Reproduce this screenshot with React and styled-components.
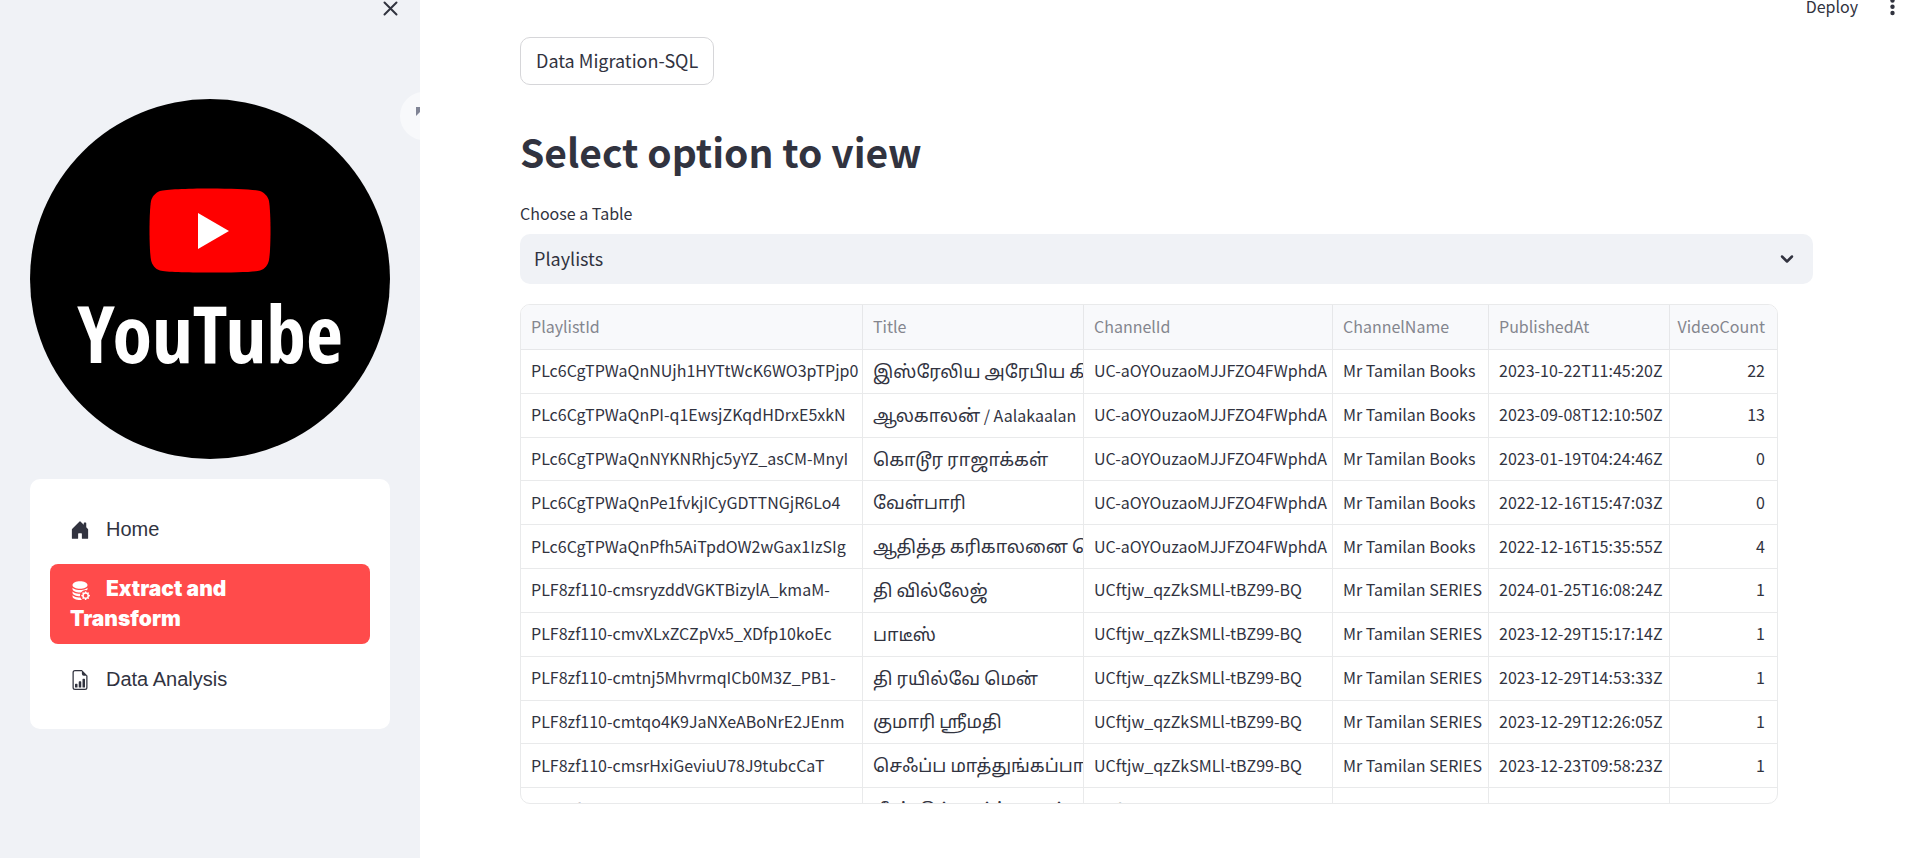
import React from 'react';
import styled, { createGlobalStyle } from 'styled-components';
import { BsHouseDoorFill, BsDatabaseFillGear, BsFileEarmarkBarGraph } from 'react-icons/bs';

const sans = '"Noto Sans CJK SC", "Noto Sans Tamil", "Noto Sans", sans-serif';

const GlobalStyle = createGlobalStyle`
  *, *::before, *::after { box-sizing: border-box; }
  body { margin: 0; background: #fff; color: #31333f; font-family: ${sans}; font-size: 18px; }
  button, select { font: inherit; color: inherit; }
`;

const Page = styled.div`
  display: flex;
  min-height: 100vh;
`;

const Sidebar = styled.aside`
  position: relative;
  flex: 0 0 420px;
  padding: 0 30px;
  background: #f0f2f6;
  overflow: hidden;
`;

const SidebarHeader = styled.div`
  display: flex;
  justify-content: flex-end;
  height: 99px;
  margin-right: -9px;
`;

const IconButton = styled.button`
  display: flex;
  align-items: flex-start;
  justify-content: center;
  padding: 0;
  border: 0;
  background: none;
  cursor: pointer;
`;

const FullscreenButton = styled(IconButton)`
  position: absolute;
  top: 92px;
  right: -28px;
  width: 48px;
  height: 48px;
  padding: 15px 0 0;
  border-radius: 50%;
  background: #f8f9fb;
  color: #808495;
`;

const Logo = styled.svg`
  display: block;
  width: 100%;
  height: auto;
`;

const Nav = styled.nav`
  display: flex;
  flex-direction: column;
  gap: 10px;
  margin-top: 20px;
  padding: 25px 20px;
  border-radius: 10px;
  background: #fff;
`;

const NavLink = styled.a`
  padding: 10px 20px;
  border-radius: 8px;
  background: ${(p) => (p.$active ? '#ff4b4b' : 'transparent')};
  color: ${(p) => (p.$active ? '#fff' : '#31333f')};
  font-family: ${(p) => (p.$active ? '"Arial Black", Inter' : '"Liberation Sans"')}, sans-serif;
  font-size: ${(p) => (p.$active ? '21px' : '20px')};
  font-weight: ${(p) => (p.$active ? 900 : 400)};
  line-height: 30px;
  text-decoration: none;

  svg {
    width: 20px;
    height: 20px;
    margin-right: 16px;
    vertical-align: -4px;
  }
`;

const Main = styled.main`
  flex: 1;
  min-width: 0;
  padding: 0 106px 54px 100px;
`;

const Toolbar = styled.header`
  position: absolute;
  top: 0;
  right: 20px;
  display: flex;
  gap: 28px;
`;

const DeployButton = styled.button`
  height: 12px;
  padding: 0;
  border: 0;
  background: none;
  font-size: 16px;
  line-height: 12px;
  cursor: pointer;
`;

const ActionButton = styled.button`
  display: block;
  height: 48px;
  margin-top: 37px;
  padding: 0 15px 2px;
  border: 1px solid #d6d6d9;
  border-radius: 10px;
  background: #fff;
  font-size: 18px;
  cursor: pointer;
`;

const Title = styled.h1`
  margin: 36px 0 0;
  font-size: 39px;
  font-weight: 600;
  line-height: 60px;
`;

const Label = styled.label`
  display: block;
  margin-top: 21px;
  font-size: 16px;
  line-height: 22px;
`;

const SelectWrap = styled.div`
  display: grid;
  align-items: center;
  margin-top: 10px;

  > * { grid-area: 1 / 1; }
  > svg { justify-self: end; margin-right: 15px; pointer-events: none; }
`;

const Select = styled.select`
  width: 100%;
  height: 50px;
  padding: 0 14px 2px;
  border: 0;
  border-radius: 10px;
  background: #f0f2f6;
  appearance: none;
`;

const TableFrame = styled.div`
  width: min(1258px, 100%);
  height: 500px;
  margin-top: 20px;
  border: 1px solid #e9eaeb;
  border-radius: 10px;
  overflow: hidden;
`;

const Table = styled.table`
  width: 100%;
  height: 527px;
  border-collapse: separate;
  border-spacing: 0;
  table-layout: fixed;
  font-size: 16px;
`;

const HeadCell = styled.th`
  width: ${(p) => p.$width};
  height: 45px;
  padding: 0 10px 2px;
  border: solid #e6e7e9;
  border-width: 0 1px 1px 0;
  background: #f8f9fb;
  color: #84868e;
  font-weight: 400;
  line-height: 20px;
  text-align: ${(p) => (p.$numeric ? 'right' : 'left')};
  white-space: nowrap;
  &:last-child { border-right: 0; padding-left: 0; padding-right: 12px; }
`;

const Cell = styled.td`
  padding: 0 0 2px 10px;
  border: solid #e9eaeb;
  border-width: 0 1px 1px 0;
  line-height: 20px;
  text-align: ${(p) => (p.$numeric ? 'right' : 'left')};
  white-space: nowrap;
  overflow: hidden;
  &:last-child { border-right: 0; padding-right: 12px; }
`;

const Tamil = styled.span`
  font-size: 18px;
`;

const columns = [
  ['PlaylistId', '342px'],
  ['Title', '221px'],
  ['ChannelId', '249px'],
  ['ChannelName', '156px'],
  ['PublishedAt', '181px'],
  ['VideoCount', 'auto'],
];

const books = ['UC-aOYOuzaoMJJFZO4FWphdA', 'Mr Tamilan Books'];
const series = ['UCftjw_qzZkSMLl-tBZ99-BQ', 'Mr Tamilan SERIES'];

const rows = [
  ['PLc6CgTPWaQnNUjh1HYTtWcK6WO3pTPjp0', <Tamil>இஸ்ரேலிய அரேபிய கிளர்ச்சி</Tamil>, ...books, '2023-10-22T11:45:20Z', 22],
  ['PLc6CgTPWaQnPI-q1EwsjZKqdHDrxE5xkN', <><Tamil>ஆலகாலன்</Tamil> / Aalakaalan</>, ...books, '2023-09-08T12:10:50Z', 13],
  ['PLc6CgTPWaQnNYKNRhjc5yYZ_asCM-MnyI', <Tamil>கொடூர ராஜாக்கள்</Tamil>, ...books, '2023-01-19T04:24:46Z', 0],
  ['PLc6CgTPWaQnPe1fvkjICyGDTTNGjR6Lo4', <Tamil>வேள்பாரி</Tamil>, ...books, '2022-12-16T15:47:03Z', 0],
  ['PLc6CgTPWaQnPfh5AiTpdOW2wGax1IzSIg', <Tamil>ஆதித்த கரிகாலனை கொன்றது</Tamil>, ...books, '2022-12-16T15:35:55Z', 4],
  ['PLF8zf110-cmsryzddVGKTBizylA_kmaM-', <Tamil>தி வில்லேஜ்</Tamil>, ...series, '2024-01-25T16:08:24Z', 1],
  ['PLF8zf110-cmvXLxZCZpVx5_XDfp10koEc', <Tamil>பாடீஸ்</Tamil>, ...series, '2023-12-29T15:17:14Z', 1],
  ['PLF8zf110-cmtnj5MhvrmqICb0M3Z_PB1-', <Tamil>தி ரயில்வே மென்</Tamil>, ...series, '2023-12-29T14:53:33Z', 1],
  ['PLF8zf110-cmtqo4K9JaNXeABoNrE2JEnm', <Tamil>குமாரி ஸ்ரீமதி</Tamil>, ...series, '2023-12-29T12:26:05Z', 1],
  ['PLF8zf110-cmsrHxiGeviuU78J9tubcCaT', <Tamil>செஃப்ப மாத்துங்கப்பா</Tamil>, ...series, '2023-12-23T09:58:23Z', 1],
  ['PLF8zf110-cmuZo5iSaRwEzNVxWqCdTn', <Tamil>மீண்டும் பார்க்கலாம்</Tamil>, ...series, '2023-12-22T10:15:32Z', 1],
];

export default function App() {
  return (
    <>
      <GlobalStyle />
      <Page>
        <Sidebar>
          <SidebarHeader>
            <IconButton aria-label="Close sidebar">
              <svg width="17" height="17" viewBox="0 0 17 17" stroke="#31333f" strokeWidth="2" strokeLinecap="round">
                <path d="M2.500 2.500 14.500 14.500M14.500 2.500 2.500 14.500" />
              </svg>
            </IconButton>
          </SidebarHeader>
          <Logo viewBox="0 0 360 360" role="img" aria-label="YouTube">
            <circle cx="180" cy="180" r="180" fill="#000" />
            <path d="M180 89.500c24 0 44 1 50 2.500c5 2 8 6 9 10c1 6 1.500 18 1.500 29.500s-.5 24-1.500 29.500c-1 5-4 9-9 10.500c-6 1.500-26 2-50 2s-44-.5-50-2c-5-1.500-8-5.500-9-10.500c-1-5.500-1.500-18-1.500-29.500s.5-23.500 1.500-29.500c1-4 4-8 9-10c6-1.500 26-2.500 50-2.500Z" fill="#f00" />
            <path d="M168 114v36l31-18Z" fill="#fff" />
            <text x="180" y="264" fill="#fff" textAnchor="middle" fontFamily="Open Sans Condensed, Roboto Condensed, Liberation Sans Narrow" fontWeight="700" fontSize="80">YouTube</text>
          </Logo>
          <FullscreenButton aria-label="View fullscreen">
            <svg width="16" height="16" viewBox="0 0 16 16" fill="currentColor">
              <path d="M0 0h9L0 9ZM16 16H7l9-9Z" />
            </svg>
          </FullscreenButton>
          <Nav>
            <NavLink href="#home"><BsHouseDoorFill />Home</NavLink>
            <NavLink href="#extract" $active aria-current="page"><BsDatabaseFillGear />Extract and<br />Transform</NavLink>
            <NavLink href="#analysis"><BsFileEarmarkBarGraph />Data Analysis</NavLink>
          </Nav>
        </Sidebar>
        <Main>
          <Toolbar>
            <DeployButton>Deploy</DeployButton>
            <IconButton aria-label="Main menu">
              <svg width="13" height="16" viewBox="0 0 13 16" fill="#31333f">
                <circle cx="6.500" cy="0.500" r="2.200" /><circle cx="6.500" cy="6.800" r="2.200" /><circle cx="6.500" cy="13" r="2.200" />
              </svg>
            </IconButton>
          </Toolbar>
          <ActionButton>Data Migration-SQL</ActionButton>
          <Title>Select option to view</Title>
          <Label htmlFor="table-select">Choose a Table</Label>
          <SelectWrap>
            <Select id="table-select" defaultValue="Playlists"><option>Playlists</option></Select>
            <svg width="22" height="20" viewBox="0 0 22 20" fill="none" stroke="#31333f" strokeWidth="2.500" strokeLinecap="round" strokeLinejoin="round">
              <path d="M6 7.500 11 12.500 16 7.500" />
            </svg>
          </SelectWrap>
          <TableFrame>
            <Table>
              <thead>
                <tr>
                  {columns.map(([name, width], i) => (
                    <HeadCell key={name} $width={width} $numeric={i === 5}>{name}</HeadCell>
                  ))}
                </tr>
              </thead>
              <tbody>
                {rows.map((row) => (
                  <tr key={row[0]}>
                    {row.map((value, i) => <Cell key={i} $numeric={i === 5}>{value}</Cell>)}
                  </tr>
                ))}
              </tbody>
            </Table>
          </TableFrame>
        </Main>
      </Page>
    </>
  );
}
